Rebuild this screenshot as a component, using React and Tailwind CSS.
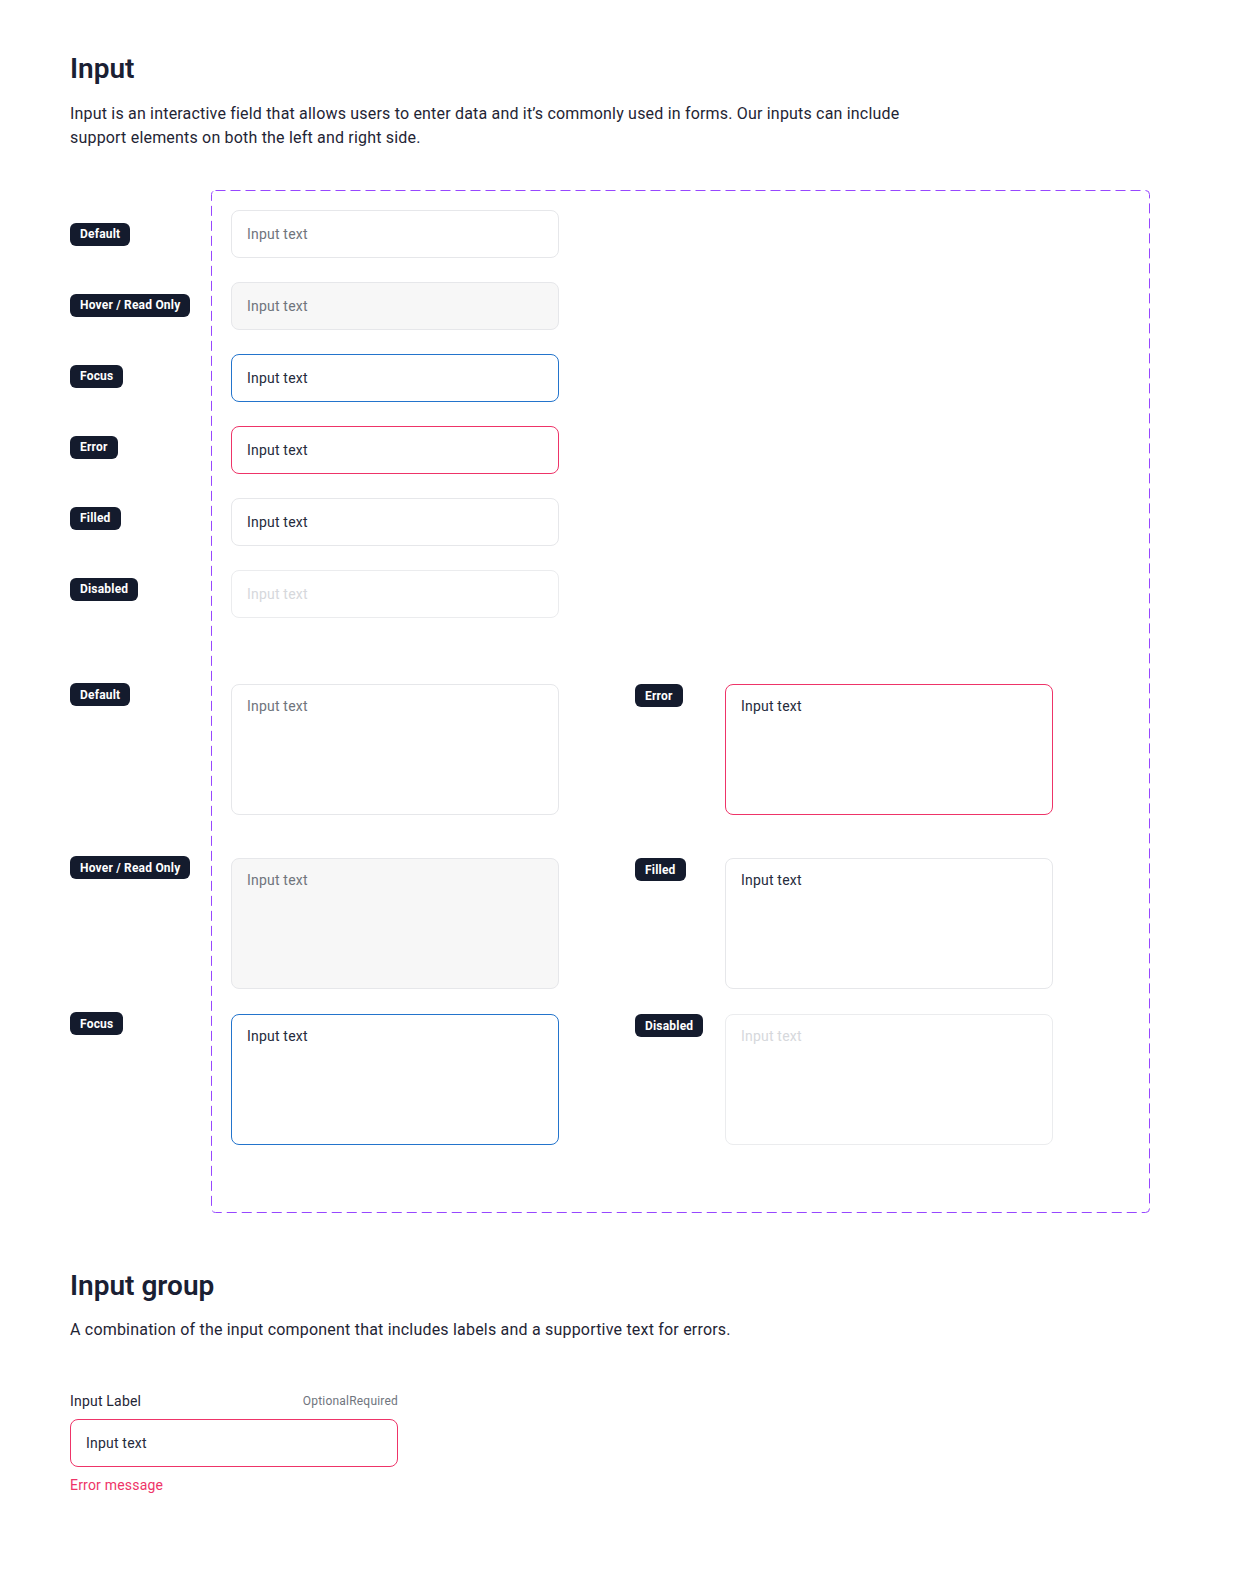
import React from "react";

const Badge = ({ children }) => (
  <span className="inline-flex h-[23px] items-center whitespace-nowrap rounded-[6px] bg-[#141b2d] px-[10px] text-[12px] font-bold leading-none tracking-[0.2px] text-white">
    {children}
  </span>
);

const inputBase =
  "flex h-12 w-[328px] items-center rounded-lg border pl-[15px] pr-4 text-sm leading-5 tracking-[0.2px]";

const simpleRows = [
  { label: "Default", cls: "border-[#e6e7ea] bg-white text-[#6f747c]" },
  { label: "Hover / Read Only", cls: "border-[#e6e7ea] bg-[#f7f7f7] text-[#6f747c]" },
  { label: "Focus", cls: "border-[#2374cc] bg-white text-[#252b3b]" },
  { label: "Error", cls: "border-[#ee3468] bg-white text-[#252b3b]" },
  { label: "Filled", cls: "border-[#e6e7ea] bg-white text-[#252b3b]" },
  { label: "Disabled", cls: "border-[#ebecee] bg-white text-[#d6d8dc]" },
];

const areaBase =
  "h-[131px] w-[328px] rounded-lg border pl-[15px] pr-4 pt-[11px] pb-3 text-sm leading-5 tracking-[0.2px]";

export default function App() {
  return (
    <div className="min-h-screen bg-white pl-[70px] pt-[51px] font-['Roboto',sans-serif] text-[#1b2233]">
      <h1 className="text-[28px] font-semibold leading-[36px] text-[#1a2033]">Input</h1>
      <p className="mt-[15px] max-w-[860px] text-base leading-6 tracking-[0.19px] text-[#1f2535]">
        Input is an interactive field that allows users to enter data and it’s commonly used in forms. Our
        inputs can include support elements on both the left and right side.
      </p>

      <div className="mt-[40px] flex">
        <div className="flex w-[141px] flex-col pt-5">
          <div className="flex flex-col gap-[23px]">
            {simpleRows.map((r) => (
              <div key={r.label} className="flex h-12 items-center">
                <Badge>{r.label}</Badge>
              </div>
            ))}
          </div>
          <div className="mt-[70px] flex flex-col">
            <div className="flex h-[131px] items-start">
              <Badge>Default</Badge>
            </div>
            <div className="mt-[42px] flex h-[131px] items-start">
              <Badge>Hover / Read Only</Badge>
            </div>
            <div className="mt-[25px] flex h-[131px] items-start">
              <Badge>Focus</Badge>
            </div>
          </div>
        </div>

        <div className="relative w-[939px] pb-[68px] pl-5 pt-5">
          <svg className="pointer-events-none absolute left-0 top-0 h-full w-full overflow-visible" aria-hidden="true">
            <rect
              x="0.5"
              y="0.5"
              rx="4"
              ry="4"
              className="h-[calc(100%-1px)] w-[calc(100%-1px)]"
              fill="none"
              stroke="#9747ff"
              strokeWidth="1"
              strokeDasharray="10 5"
            />
          </svg>

          <div className="flex flex-col gap-6">
            {simpleRows.map((r) => (
              <div key={r.label} className={`${inputBase} ${r.cls}`}>
                Input text
              </div>
            ))}
          </div>

          <div className="mt-[66px] flex flex-col">
            <div className="flex items-start">
              <div className={`${areaBase} border-[#e6e7ea] bg-white text-[#6f747c]`}>Input text</div>
              <div className="ml-[76px] flex w-[90px] items-start">
                <Badge>Error</Badge>
              </div>
              <div className={`${areaBase} border-[#ee3468] bg-white text-[#252b3b]`}>Input text</div>
            </div>
            <div className="mt-[43px] flex items-start">
              <div className={`${areaBase} border-[#e6e7ea] bg-[#f7f7f7] text-[#6f747c]`}>Input text</div>
              <div className="ml-[76px] flex w-[90px] items-start">
                <Badge>Filled</Badge>
              </div>
              <div className={`${areaBase} border-[#e6e7ea] bg-white text-[#252b3b]`}>Input text</div>
            </div>
            <div className="mt-[25px] flex items-start">
              <div className={`${areaBase} border-[#2374cc] bg-white text-[#252b3b]`}>Input text</div>
              <div className="ml-[76px] flex w-[90px] items-start">
                <Badge>Disabled</Badge>
              </div>
              <div className={`${areaBase} border-[#ebecee] bg-white text-[#d6d8dc]`}>Input text</div>
            </div>
          </div>
        </div>
      </div>

      <h2 className="mt-[55px] text-[28px] font-semibold leading-[36px] text-[#1a2033]">Input group</h2>
      <p className="mt-[14px] text-base leading-6 tracking-[0.2px] text-[#1f2535]">
        A combination of the input component that includes labels and a supportive text for errors.
      </p>

      <div className="mt-[49px] w-[328px]">
        <div className="flex items-center justify-between">
          <span className="text-sm leading-5 tracking-[0.2px] text-[#1f2535]">Input Label</span>
          <span className="text-[12px] leading-5 tracking-[0.2px] text-[#70757e]">OptionalRequired</span>
        </div>
        <div className={`${inputBase} mt-2 border-[#ee3468] bg-white text-[#252b3b]`}>Input text</div>
        <div className="mt-2 text-sm leading-5 tracking-[0.2px] text-[#ee3468]">Error message</div>
      </div>
    </div>
  );
}
